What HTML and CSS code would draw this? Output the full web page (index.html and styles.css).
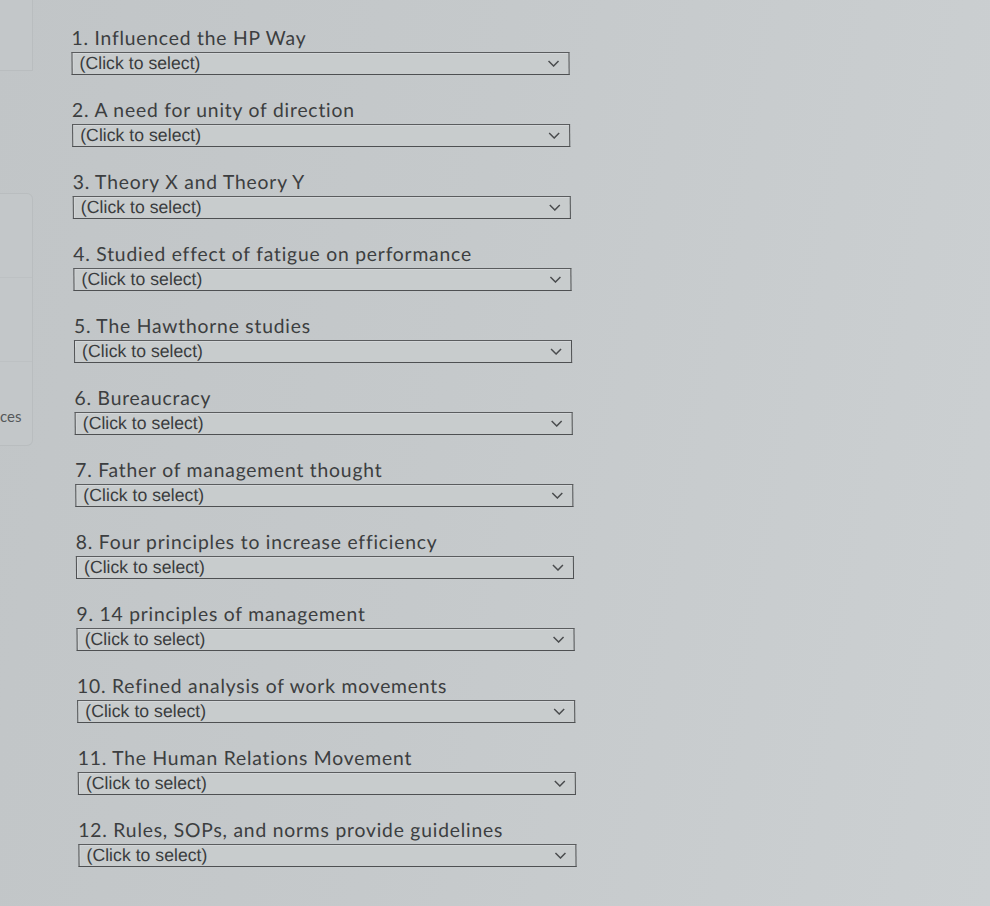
FILE: index.html
```html
<!DOCTYPE html>
<html lang="en">
<head>
<meta charset="utf-8">
<title>Matching</title>
<link rel="stylesheet" href="styles.css">
</head>
<body>
<div class="page">
  <aside class="side">
    <div class="side-top"></div>
    <div class="side-group">
      <div class="side-cell"></div>
      <div class="side-cell"></div>
      <div class="side-cell side-last"><span class="side-text">ces</span></div>
    </div>
  </aside>
  <main class="list">
    <div class="item"><div class="label">1. Influenced the HP Way</div><div class="select"><span>(Click to select)</span><svg class="chev" viewBox="0 0 12 7"><path d="M1 1l5 5 5-5"/></svg></div></div>
    <div class="item"><div class="label">2. A need for unity of direction</div><div class="select"><span>(Click to select)</span><svg class="chev" viewBox="0 0 12 7"><path d="M1 1l5 5 5-5"/></svg></div></div>
    <div class="item"><div class="label">3. Theory X and Theory Y</div><div class="select"><span>(Click to select)</span><svg class="chev" viewBox="0 0 12 7"><path d="M1 1l5 5 5-5"/></svg></div></div>
    <div class="item"><div class="label">4. Studied effect of fatigue on performance</div><div class="select"><span>(Click to select)</span><svg class="chev" viewBox="0 0 12 7"><path d="M1 1l5 5 5-5"/></svg></div></div>
    <div class="item"><div class="label">5. The Hawthorne studies</div><div class="select"><span>(Click to select)</span><svg class="chev" viewBox="0 0 12 7"><path d="M1 1l5 5 5-5"/></svg></div></div>
    <div class="item"><div class="label">6. Bureaucracy</div><div class="select"><span>(Click to select)</span><svg class="chev" viewBox="0 0 12 7"><path d="M1 1l5 5 5-5"/></svg></div></div>
    <div class="item"><div class="label">7. Father of management thought</div><div class="select"><span>(Click to select)</span><svg class="chev" viewBox="0 0 12 7"><path d="M1 1l5 5 5-5"/></svg></div></div>
    <div class="item"><div class="label">8. Four principles to increase efficiency</div><div class="select"><span>(Click to select)</span><svg class="chev" viewBox="0 0 12 7"><path d="M1 1l5 5 5-5"/></svg></div></div>
    <div class="item"><div class="label">9. 14 principles of management</div><div class="select"><span>(Click to select)</span><svg class="chev" viewBox="0 0 12 7"><path d="M1 1l5 5 5-5"/></svg></div></div>
    <div class="item"><div class="label">10. Refined analysis of work movements</div><div class="select"><span>(Click to select)</span><svg class="chev" viewBox="0 0 12 7"><path d="M1 1l5 5 5-5"/></svg></div></div>
    <div class="item"><div class="label">11. The Human Relations Movement</div><div class="select"><span>(Click to select)</span><svg class="chev" viewBox="0 0 12 7"><path d="M1 1l5 5 5-5"/></svg></div></div>
    <div class="item"><div class="label">12. Rules, SOPs, and norms provide guidelines</div><div class="select"><span>(Click to select)</span><svg class="chev" viewBox="0 0 12 7"><path d="M1 1l5 5 5-5"/></svg></div></div>
  </main>
</div>
</body>
</html>
```
FILE: styles.css
```css
html, body {
  margin: 0;
  padding: 0;
}
body {
  width: 990px;
  height: 906px;
  overflow: hidden;
  background: linear-gradient(100deg, #c1c5c7 0%, #c5c9cb 45%, #ccd0d2 100%);
  font-family: "Lato", "Open Sans", sans-serif;
  color: #3b3d3f;
}
.page {
  display: flex;
  height: 906px;
}
.side {
  width: 33px;
  flex: none;
  display: flex;
  flex-direction: column;
}
.side-top {
  height: 70px;
  border-right: 1px solid #b9bdbf;
  border-bottom: 1px solid #b9bdbf;
  background: #c3c7c9;
}
.side-group {
  margin-top: 122px;
  border: 1px solid #b9bdbf;
  border-left: none;
  border-radius: 0 6px 6px 0;
  background: #c3c7c9;
  display: flex;
  flex-direction: column;
}
.side-cell {
  height: 83px;
  border-bottom: 1px solid #bdc1c3;
  position: relative;
}
.side-last {
  border-bottom: none;
}
.side-text {
  position: absolute;
  left: 0;
  top: 45px;
  font-family: "Lato", sans-serif;
  font-size: 15px;
  color: #55585a;
}
.list {
  margin-left: 38px;
  padding-top: 27px;
  display: flex;
  flex-direction: column;
  gap: 24px;
  transform: skewX(0.5deg);
  transform-origin: 0 0;
}
.item {
  display: flex;
  flex-direction: column;
  gap: 3px;
  width: 498px;
}
.label {
  font-size: 19.4px;
  line-height: 22px;
  letter-spacing: 0.75px;
  color: #3c3e40;
  white-space: nowrap;
}
.select {
  height: 21px;
  border: 1px solid #4e5052;
  border-top-color: #5a5c5e;
  background: #c8cccd;
  display: flex;
  align-items: center;
  justify-content: space-between;
  padding: 0 9px 0 7px;
  box-shadow: inset 1px 1px 0 #d3d6d8;
}
.select span {
  font-family: "Liberation Sans", Arial, sans-serif;
  font-size: 17.7px;
  color: #3a3c3e;
  line-height: 21px;
}
.chev {
  width: 12px;
  height: 7px;
  fill: none;
  stroke: #4a4c4e;
  stroke-width: 1.5;
}
```
